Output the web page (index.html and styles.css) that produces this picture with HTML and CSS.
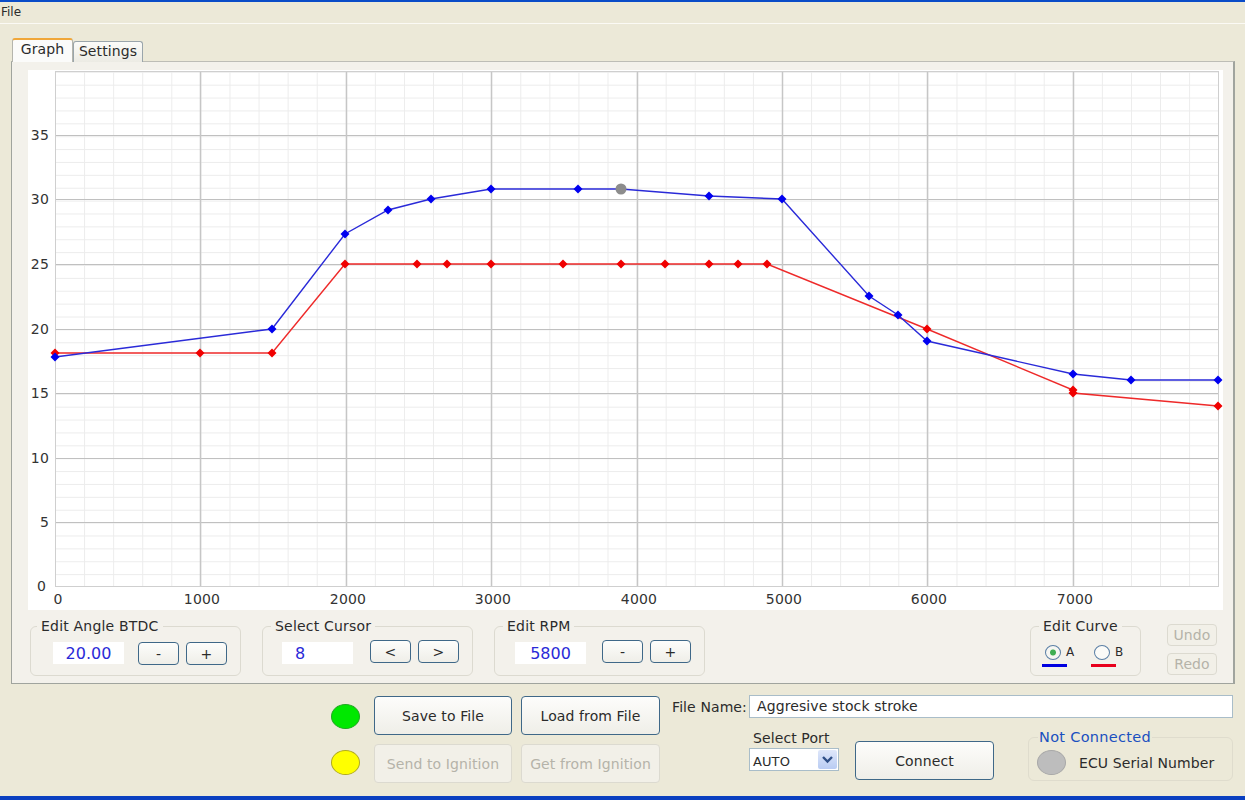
FILE: index.html
```html
<!DOCTYPE html>
<html lang="en">
<head>
    <meta charset="UTF-8">
    <title>Ignition Curve Editor</title>
    <link rel="stylesheet" href="styles.css">
</head>
<body>
    <div class="menu-bar"><span>File</span></div>

    <div class="tabs">
        <div class="tab tab-active">Graph</div>
        <div class="tab">Settings</div>
    </div>

    <div class="panel">
        <svg class="chart" width="1195" height="540" viewBox="0 0 1195 540">
            <defs>
                <pattern id="minor-grid" width="29.08" height="12.88" x="27" patternUnits="userSpaceOnUse" y="1.8">
                    <path d="M0.5 0V12.88M0 0.5H29.08" fill="none" stroke="#ececec" stroke-width="1"/>
                </pattern>
                <g id="dot-blue"><path d="M0 -4.5L4.5 0L0 4.5L-4.5 0Z" fill="#0000f0"/></g>
                <g id="dot-red"><path d="M0 -4.5L4.5 0L0 4.5L-4.5 0Z" fill="#f00000"/></g>
            </defs>

            <rect x="27" y="1" width="1163" height="515" fill="url(#minor-grid)"/>

            <path class="major-h" d="M27 65.5H1190M27 129.5H1190M27 194.5H1190M27 259.5H1190M27 323.5H1190M27 388.5H1190M27 452.5H1190"/>
            <path class="major-v" d="M172.5 1V516M318.5 1V516M463.5 1V516M609.5 1V516M754.5 1V516M899.5 1V516M1045.5 1V516"/>
            <rect class="plot-frame" x="27.5" y="1.5" width="1163" height="515"/>

            <g class="y-labels">
                <text x="21" y="70">35</text>
                <text x="21" y="134">30</text>
                <text x="21" y="199">25</text>
                <text x="21" y="264">20</text>
                <text x="21" y="328">15</text>
                <text x="21" y="393">10</text>
                <text x="21" y="457">5</text>
                <text x="18" y="521">0</text>
            </g>
            <g class="x-labels">
                <text x="30" y="534">0</text>
                <text x="174" y="534">1000</text>
                <text x="320" y="534">2000</text>
                <text x="465" y="534">3000</text>
                <text x="611" y="534">4000</text>
                <text x="756" y="534">5000</text>
                <text x="901" y="534">6000</text>
                <text x="1047" y="534">7000</text>
            </g>

            <polyline class="curve-b" points="27,283 172,283 244,283 317,194 389,194 419,194 463,194 535,194 593,194 637,194 681,194 710,194 739,194 899,259 1045,320 1045,323 1190,336"/>
            <polyline class="curve-a" points="27,287 244,259 317,164 360,140 403,129 463,119 550,119 593,119 681,126 754,129 841,226 870,245 899,271 1045,304 1103,310 1190,310"/>

            <use href="#dot-red" x="27" y="283"/>
            <use href="#dot-red" x="172" y="283"/>
            <use href="#dot-red" x="244" y="283"/>
            <use href="#dot-red" x="317" y="194"/>
            <use href="#dot-red" x="389" y="194"/>
            <use href="#dot-red" x="419" y="194"/>
            <use href="#dot-red" x="463" y="194"/>
            <use href="#dot-red" x="535" y="194"/>
            <use href="#dot-red" x="593" y="194"/>
            <use href="#dot-red" x="637" y="194"/>
            <use href="#dot-red" x="681" y="194"/>
            <use href="#dot-red" x="710" y="194"/>
            <use href="#dot-red" x="739" y="194"/>
            <use href="#dot-red" x="899" y="259"/>
            <use href="#dot-red" x="1045" y="320"/>
            <use href="#dot-red" x="1045" y="323"/>
            <use href="#dot-red" x="1190" y="336"/>

            <use href="#dot-blue" x="27" y="287"/>
            <use href="#dot-blue" x="244" y="259"/>
            <use href="#dot-blue" x="317" y="164"/>
            <use href="#dot-blue" x="360" y="140"/>
            <use href="#dot-blue" x="403" y="129"/>
            <use href="#dot-blue" x="463" y="119"/>
            <use href="#dot-blue" x="550" y="119"/>
            <circle cx="593" cy="119" r="5.5" fill="#8c8c8c"/>
            <use href="#dot-blue" x="681" y="126"/>
            <use href="#dot-blue" x="754" y="129"/>
            <use href="#dot-blue" x="841" y="226"/>
            <use href="#dot-blue" x="870" y="245"/>
            <use href="#dot-blue" x="899" y="271"/>
            <use href="#dot-blue" x="1045" y="304"/>
            <use href="#dot-blue" x="1103" y="310"/>
            <use href="#dot-blue" x="1190" y="310"/>
        </svg>

        <div class="controls">
            <fieldset class="group group-edit group-angle">
                <legend>Edit Angle BTDC</legend>
                <div class="value">20.00</div>
                <button class="btn btn-small">-</button>
                <button class="btn btn-small">+</button>
            </fieldset>
            <fieldset class="group group-edit group-cursor">
                <legend>Select Cursor</legend>
                <div class="value value-left">8</div>
                <button class="btn btn-small btn-raised">&lt;</button>
                <button class="btn btn-small btn-raised">&gt;</button>
            </fieldset>
            <fieldset class="group group-edit group-rpm">
                <legend>Edit RPM</legend>
                <div class="value">5800</div>
                <button class="btn btn-small btn-raised">-</button>
                <button class="btn btn-small btn-raised">+</button>
            </fieldset>

            <fieldset class="group group-curve">
                <legend>Edit Curve</legend>
                <div class="curve-option">
                    <div class="curve-radio">
                        <span class="radio radio-on"></span>A
                    </div>
                    <div class="swatch swatch-a"></div>
                </div>
                <div class="curve-option">
                    <div class="curve-radio">
                        <span class="radio"></span>B
                    </div>
                    <div class="swatch swatch-b"></div>
                </div>
            </fieldset>

            <div class="history">
                <button class="btn btn-off btn-history">Undo</button>
                <button class="btn btn-off btn-history">Redo</button>
            </div>
        </div>
    </div>

    <div class="footer">
        <div class="lamps">
            <span class="lamp lamp-green"></span>
            <span class="lamp lamp-yellow"></span>
        </div>
        <div class="file-buttons">
            <button class="btn btn-large">Save to File</button>
            <button class="btn btn-large">Load from File</button>
            <button class="btn btn-large btn-off">Send to Ignition</button>
            <button class="btn btn-large btn-off">Get from Ignition</button>
        </div>
        <div class="footer-right">
            <div class="file-row">
                <label>File Name:</label>
                <div class="file-input">Aggresive stock stroke</div>
            </div>
            <div class="port-row">
                <div class="port">
                    <div class="port-label">Select Port</div>
                    <div class="select">
                        <span class="select-text">AUTO</span>
                        <span class="select-arrow">
                            <svg width="19" height="19" viewBox="0 0 19 19"><path d="M5 7L9.5 11.5L14 7" fill="none" stroke="#2f4f86" stroke-width="2.4"/></svg>
                        </span>
                    </div>
                </div>
                <button class="btn btn-connect">Connect</button>
                <fieldset class="group group-ecu">
                    <legend>Not Connected</legend>
                    <span class="lamp lamp-gray"></span>
                    <span>ECU Serial Number</span>
                </fieldset>
            </div>
        </div>
    </div>
    <div class="task-bar"></div>
</body>
</html>
```

FILE: styles.css
```css
* {
    box-sizing: border-box;
}
html, body {
    height: 800px;
}
body {
    font-family: "DejaVu Sans", Verdana, sans-serif;
    font-size: 14px;
    letter-spacing: 0.1px;
    margin: 0;
    padding: 0;
    background-color: #ece9d8;
    color: #2b2b2b;
    overflow: hidden;
    display: flex;
    flex-direction: column;
}
.menu-bar {
    height: 24px;
    border-top: 2px solid #0a4cc8;
    border-bottom: 1px solid #fbfaf5;
    padding: 3px 1px;
    font-size: 12px;
    letter-spacing: 0;
}

/* Tabs */
.tabs {
    display: flex;
    align-items: flex-end;
    height: 24px;
    margin: 14px 0 0 12px;
    position: relative;
    z-index: 1;
    margin-bottom: -1px;
}
.tab {
    height: 21px;
    width: 70px;
    padding-top: 1px;
    text-align: center;
    background: linear-gradient(#fbfbf8, #ecebe4);
    border: 1px solid #9aa5ab;
    border-bottom: none;
    border-radius: 3px 3px 0 0;
}
.tab-active {
    height: 24px;
    width: 61px;
    padding-top: 1px;
    background: #fbfbfa;
    border-color: #b5b5ad;
    border-top: 2px solid #f0a73a;
}
.panel {
    width: 1224px;
    height: 623px;
    margin-left: 11px;
    padding: 8px 0 0 16px;
    background-color: #f3f1eb;
    border: 1px solid #a0a49e;
    border-top-color: #bdbdb6;
    border-right-width: 2px;
}
.chart {
    display: block;
    background-color: #fff;
}
.chart text {
    font-family: "DejaVu Sans", Verdana, sans-serif;
    font-size: 14px;
    letter-spacing: 0.2px;
    fill: #333;
}
.major-h {
    stroke: #c0c0c0;
    stroke-width: 1;
    fill: none;
}
.major-v {
    stroke: #c6c6c6;
    stroke-width: 1.5;
    fill: none;
}
.plot-frame {
    fill: none;
    stroke: #cfcfcf;
}
.y-labels text {
    text-anchor: end;
}
.x-labels text {
    text-anchor: middle;
}
.curve-a, .curve-b {
    fill: none;
    stroke-width: 1.4;
}
.curve-a {
    stroke: #2a2ad8;
}
.curve-b {
    stroke: #ee2a2a;
}

/* Group boxes */
.controls {
    display: flex;
    align-items: flex-start;
    margin: 8px 0 0 2px;
}
.group {
    margin: 0;
    padding: 0;
    border: 1.5px solid #dcdad0;
    border-radius: 6px;
    min-width: 0;
}
.group legend {
    padding: 0 4px;
    margin-left: 6px;
    line-height: 16px;
    letter-spacing: 0.2px;
    white-space: nowrap;
}
.group-edit {
    flex: none;
    width: 211px;
    height: 58px;
    margin-right: 21px;
    padding-top: 8px;
    display: flex;
    align-items: flex-start;
}
.group-cursor legend, .group-rpm legend {
    margin-left: 8px;
}
.value {
    flex: none;
    width: 71px;
    height: 22px;
    background-color: #fff;
    color: #2a2ad8;
    font-size: 16px;
    letter-spacing: 0;
    line-height: 23px;
    text-align: center;
}
.group-angle .value {
    margin: 0 14px 0 22px;
}
.group-cursor .value {
    margin: 0 17px 0 19px;
}
.group-rpm .value {
    margin: 0 16px 0 20px;
}
.value-left {
    text-align: left;
    padding-left: 13px;
}
.btn {
    font-family: inherit;
    font-size: 14px;
    letter-spacing: 0.1px;
    color: #2b2b2b;
    background: linear-gradient(#fdfdfb, #efeee8);
    border: 1.5px solid #3f6888;
    border-radius: 4px;
    padding: 0;
}
.btn-small {
    flex: none;
    width: 41px;
    height: 23px;
    margin-right: 7px;
}
.btn-raised {
    margin-top: -2px;
}
.btn-off {
    color: #b5b3a9;
    background: #f2f0e8;
    border-color: #dcdad0;
}
.group-curve {
    flex: none;
    width: 111px;
    height: 58px;
    margin-left: 304px;
    display: flex;
}
.group-curve legend {
    margin-left: 8px;
}
.curve-option {
    width: 50px;
}
.curve-option:first-of-type {
    margin-left: 11px;
}
.curve-radio {
    display: flex;
    align-items: center;
    height: 16px;
    margin-top: 10px;
    padding-left: 3px;
    font-size: 12px;
    letter-spacing: 0;
}
.radio {
    flex: none;
    width: 16px;
    height: 15px;
    margin-right: 5px;
    border: 1.5px solid #5a7fa5;
    border-radius: 50%;
    background: #fbfbf8;
}
.radio-on {
    background: radial-gradient(circle, #3fae52 0 2.5px, #f6f6f2 3.5px);
}
.swatch {
    width: 25px;
    height: 3px;
    margin-top: 4px;
}
.swatch-a {
    background-color: #0000e0;
}
.swatch-b {
    background-color: #e8001c;
}
.history {
    display: flex;
    flex-direction: column;
    gap: 7px;
    margin: 6px 0 0 26px;
}
.btn-history {
    width: 50px;
    height: 22px;
}

/* Footer */
.footer {
    flex: 1;
    display: flex;
    align-items: flex-start;
    padding: 11px 0 0 331px;
}
.lamps {
    display: flex;
    flex-direction: column;
    gap: 21px;
    margin: 9px 14px 0 0;
}
.lamp {
    display: block;
    flex: none;
    width: 29px;
    height: 25px;
    border-radius: 50%;
    border: 1px solid #8a9a40;
}
.lamp-green {
    background-color: #00e800;
    border-color: #22a822;
}
.lamp-yellow {
    background-color: #ffff00;
    border-color: #b0aa20;
}
.lamp-gray {
    background-color: #bdbdbd;
    border-color: #a8a8a8;
}
.file-buttons {
    display: grid;
    grid-template-columns: 138px 139px;
    grid-auto-rows: 39px;
    gap: 9px;
    margin-top: 1px;
}
.btn-large {
    width: 100%;
    height: 39px;
}
.footer-right {
    width: 561px;
    margin-left: 12px;
}
.file-row {
    display: flex;
    align-items: center;
}
.file-row label {
    width: 77px;
    white-space: nowrap;
}
.file-input {
    width: 484px;
    height: 23px;
    padding-left: 7px;
    line-height: 21px;
    background-color: #fff;
    border: 1px solid #a9bdc9;
}
.port-row {
    display: flex;
    align-items: flex-start;
    padding-left: 77px;
}
.port-label {
    margin: 12px 0 2px 4px;
    line-height: 16px;
}
.select {
    width: 90px;
    height: 23px;
    display: flex;
    align-items: center;
    justify-content: space-between;
    padding: 0 1px 0 3px;
    font-size: 13px;
    background-color: #fff;
    border: 1px solid #a9bdc9;
}
.select-text {
    padding-top: 3px;
}
.select-arrow {
    display: block;
    width: 19px;
    height: 19px;
    background: linear-gradient(#dfe7fa, #b9ccf3);
    border-radius: 2px;
}
.select-arrow svg {
    display: block;
}
.btn-connect {
    width: 139px;
    height: 39px;
    margin: 23px 0 0 16px;
}
.group-ecu {
    flex: none;
    width: 205px;
    height: 52px;
    margin: 11px 0 0 34px;
    padding: 0 0 0 8px;
    display: flex;
    align-items: center;
    gap: 13px;
    border-color: #dfdccd;
}
.group-ecu legend {
    margin-left: 1px;
    padding: 0 1px;
    color: #1a50c0;
    font-size: 14.5px;
    letter-spacing: 0.3px;
}
.task-bar {
    height: 4px;
    background-color: #0a3fc0;
}
```
